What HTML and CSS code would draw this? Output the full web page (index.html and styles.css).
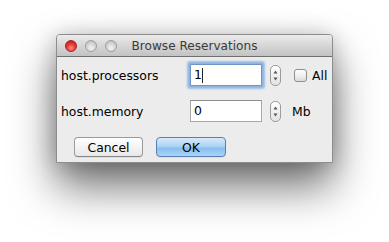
FILE: index.html
```html
<!DOCTYPE html>
<html>
<head>
<meta charset="utf-8">
<link rel="stylesheet" href="styles.css">
</head>
<body>
<div class="stage">
<div class="window">
  <div class="titlebar">
    <div class="lights">
      <span class="light red"></span>
      <span class="light gray"></span>
      <span class="light gray"></span>
    </div>
    <div class="title">Browse Reservations</div>
    <div></div>
  </div>
  <div class="content">
    <div class="row">
      <span class="label">host.processors</span>
      <span class="field focused">1<span class="caret"></span></span>
      <span class="stepper"><svg width="11" height="21" viewBox="0 0 11 21"><path d="M5.5 5.5 L7.5 8.5 L3.5 8.5 Z" fill="#555"/><path d="M5.5 15.5 L7.5 12.5 L3.5 12.5 Z" fill="#555"/></svg></span>
      <span class="check"></span>
      <span class="after">All</span>
    </div>
    <div class="row">
      <span class="label">host.memory</span>
      <span class="field">0</span>
      <span class="stepper"><svg width="11" height="21" viewBox="0 0 11 21"><path d="M5.5 5.5 L7.5 8.5 L3.5 8.5 Z" fill="#555"/><path d="M5.5 15.5 L7.5 12.5 L3.5 12.5 Z" fill="#555"/></svg></span>
      <span class="unit">Mb</span>
    </div>
    <div class="buttons">
      <span class="btn">Cancel</span>
      <span class="btn primary">OK</span>
    </div>
  </div>
</div>
</div>
</body>
</html>
```

FILE: styles.css
```css
html, body {
  margin: 0;
  padding: 0;
  background: #ffffff;
  height: 100%;
}
body {
  font-family: "DejaVu Sans", "Lucida Grande", sans-serif;
  font-size: 12.4px;
  color: #000;
}
.stage {
  height: 242px;
  padding: 34px 0 0 56px;
  box-sizing: border-box;
  background: #fff;
}
.window {
  width: 277px;
  height: 129px;
  box-sizing: border-box;
  border: 1px solid #8c8c8c;
  border-radius: 4px 4px 0 0;
  display: flex;
  flex-direction: column;
  box-shadow: 0 24px 44px rgba(0,0,0,0.55), 0 2px 22px rgba(0,0,0,0.22);
  background: #ececec;
}
.titlebar {
  height: 21px;
  border-bottom: 1px solid #6f6f6f;
  border-radius: 3px 3px 0 0;
  background: linear-gradient(#ececec, #d6d6d6 50%, #c3c3c3);
  display: grid;
  grid-template-columns: 1fr auto 1fr;
  align-items: center;
}
.lights {
  display: flex;
  gap: 8px;
  padding-left: 8px;
  padding-top: 1px;
}
.light {
  width: 12px;
  height: 12px;
  border-radius: 50%;
  box-sizing: border-box;
}
.light.red {
  background: radial-gradient(circle at 50% 70%, #ff8a85 0%, #e0302a 55%, #b8140f 100%);
  border: 1px solid #a8241f;
}
.light.gray {
  background: radial-gradient(circle at 50% 70%, #f4f4f4 0%, #d0d0d0 60%, #b4b4b4 100%);
  border: 1px solid #9e9e9e;
}
.title {
  font-size: 12.1px;
  color: #3a3a3a;
  padding-top: 1px;
}
.content {
  flex: 1;
  display: flex;
  flex-direction: column;
  padding: 7px 0 0 4px;
  gap: 14px;
}
.row {
  display: flex;
  align-items: center;
  height: 22px;
}
.label {
  width: 129px;
  padding-top: 1px;
}
.field {
  width: 72px;
  height: 22px;
  box-sizing: border-box;
  border: 1px solid #a9a9a9;
  border-top-color: #8e8e8e;
  background: #fff;
  padding: 2px 0 0 3px;
  display: flex;
  align-items: flex-start;
  line-height: 16px;
}
.field.focused {
  border: 1px solid #6d94c4;
  box-shadow: 0 0 0 1.5px #8db6e6, 0 0 2px 2.5px rgba(110,160,220,0.6);
  border-radius: 1px;
}
.caret {
  width: 1px;
  height: 15px;
  background: #222;
  margin-top: 1px;
}
.stepper {
  margin-left: 8px;
  width: 11px;
  height: 21px;
  box-sizing: border-box;
  border: 1px solid #9c9c9c;
  border-radius: 5px;
  background: linear-gradient(#ffffff, #f0f0f0 50%, #e2e2e2);
  display: flex;
  align-items: center;
  justify-content: center;
  overflow: hidden;
}
.stepper svg {
  flex: none;
}
.check {
  margin-left: 13px;
  width: 13px;
  height: 13px;
  box-sizing: border-box;
  border: 1px solid #8e8e8e;
  border-radius: 3px;
  background: linear-gradient(#ffffff, #ececec 60%, #dcdcdc);
}
.after {
  margin-left: 5px;
  padding-top: 1px;
}
.unit {
  margin-left: 11px;
  padding-top: 1px;
}
.buttons {
  display: flex;
  gap: 13px;
  padding-left: 13px;
  margin-top: 1px;
}
.btn {
  width: 69px;
  height: 20px;
  box-sizing: border-box;
  border: 1px solid #9b9b9b;
  border-bottom-color: #888;
  border-radius: 4px;
  background: linear-gradient(#ffffff, #f4f4f4 50%, #e8e8e8);
  display: flex;
  align-items: center;
  justify-content: center;
  box-shadow: 0 1px 0 rgba(0,0,0,0.06);
}
.btn.primary {
  width: 70px;
  border-color: #5b7fae;
  background: linear-gradient(#d8eafb, #a8d0f5 50%, #86bdf0 55%, #a9d5fa);
}
```
